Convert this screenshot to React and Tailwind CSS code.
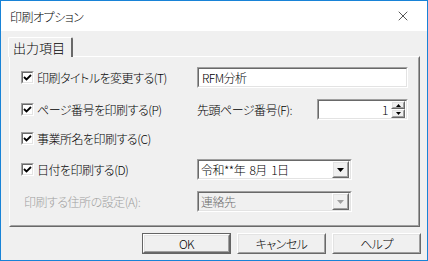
import { X } from "lucide-react";

const Sunken = ({ className = "", inner = "", children }) => (
  <div className={`border border-t-[#a0a0a0] border-l-[#a0a0a0] border-r-white border-b-white ${className}`}>
    <div className={`h-full border border-t-[#696969] border-l-[#696969] border-r-[#e3e3e3] border-b-[#e3e3e3] ${inner}`}>
      {children}
    </div>
  </div>
);

const Raised = ({ className = "", children }) => (
  <div className={`border border-t-white border-l-white border-r-[#696969] border-b-[#696969] ${className}`}>
    <div className="h-full border border-t-[#e3e3e3] border-l-[#e3e3e3] border-r-[#a0a0a0] border-b-[#a0a0a0] bg-[#f0f0f0] flex items-center justify-center">
      {children}
    </div>
  </div>
);

const CheckRow = ({ label }) => (
  <label className="flex items-center gap-[3px] w-[176px] shrink-0">
    <Sunken className="w-[13px] h-[13px] shrink-0" inner="bg-white flex items-center justify-center">
      <svg width="9" height="9" viewBox="0 0 9 9">
        <polyline points="1,4 3.5,6.5 8,2" fill="none" stroke="#000" strokeWidth="1.8" />
      </svg>
    </Sunken>
    <span className="whitespace-nowrap">{label}</span>
  </label>
);

const DownArrow = ({ color = "#000" }) => (
  <svg width="7" height="4" viewBox="0 0 7 4">
    <polygon points="0,0 7,0 3.5,4" fill={color} />
  </svg>
);

const Combo = ({ value, disabled }) => (
  <Sunken
    className="w-[155px] h-[21px]"
    inner={`${disabled ? "bg-[#f0f0f0] text-[#6d6d6d]" : "bg-white"} flex items-center pl-[2px] pr-[1px]`}
  >
    <span className="flex-1 whitespace-pre">{value}</span>
    <Raised className="w-[17px] h-[17px]">
      <DownArrow color={disabled ? "#a0a0a0" : "#000"} />
    </Raised>
  </Sunken>
);

const Button = ({ label, isDefault }) => (
  <div className={`w-[89px] h-[21px] ${isDefault ? "border border-[#646464]" : ""}`}>
    <Raised className="h-full w-full">{label}</Raised>
  </div>
);

export default function App() {
  return (
    <div className="w-[428px] h-[261px] border border-[#1883d7] bg-[#f0f0f0] flex flex-col text-[12px] leading-none font-light tracking-[-0.5px] text-black font-['Noto_Sans_CJK_JP',sans-serif] [font-feature-settings:'palt']">
      {/* Title bar */}
      <div className="h-[30px] bg-white flex items-center justify-between shrink-0">
        <span className="pl-[9px] pt-[1px]">印刷オプション</span>
        <span className="w-[45px] h-full flex items-center justify-center pr-[4px]">
          <X size={16} strokeWidth={1} />
        </span>
      </div>

      {/* Tabs */}
      <div className="px-[7px] pt-[6px] flex flex-col">
        <div className="relative z-10 -mb-px self-start w-[65px] h-[20px] bg-[#f0f0f0] border-t border-l border-t-white border-l-white border-r-2 border-r-[#696969] rounded-t-[2px] flex items-center justify-center">
          <span className="text-[13px] pr-[2px] tracking-normal">出力項目</span>
        </div>
        <div className="ml-px w-[411px] h-[171px] border border-t-white border-l-white border-r-[#696969] border-b-[#696969]">
          <div className="h-full border border-transparent border-r-[#a0a0a0] border-b-[#a0a0a0] pl-[10px] pr-[10px] pt-[9px] flex flex-col">
            <div className="flex items-center h-[21px]">
              <CheckRow label="印刷タイトルを変更する(T)" />
              <Sunken className="w-[211px] h-[21px]" inner="bg-white flex items-center pl-[3px]">
                <span>RFM分析</span>
              </Sunken>
            </div>

            <div className="flex items-center h-[21px] mt-[11px]">
              <CheckRow label="ページ番号を印刷する(P)" />
              <span className="flex-1 whitespace-nowrap">先頭ページ番号(F):</span>
              <Sunken className="w-[91px] h-[21px]" inner="bg-white flex items-center justify-end pr-px">
                <span className="pr-[3px]">1</span>
                <div className="flex flex-col">
                  <Raised className="w-[14px] h-[8px]">
                    <svg width="5" height="3" viewBox="0 0 5 3"><polygon points="2.5,0 5,3 0,3" fill="#000" /></svg>
                  </Raised>
                  <Raised className="w-[14px] h-[9px]">
                    <svg width="5" height="3" viewBox="0 0 5 3"><polygon points="0,0 5,0 2.5,3" fill="#000" /></svg>
                  </Raised>
                </div>
              </Sunken>
            </div>

            <div className="flex items-center h-[21px] mt-[8px]">
              <CheckRow label="事業所名を印刷する(C)" />
            </div>

            <div className="flex items-center h-[21px] mt-[10px]">
              <CheckRow label="日付を印刷する(D)" />
              <Combo value="令和**年  8月  1日" />
            </div>

            <div className="flex items-center h-[21px] mt-[11px]">
              <span className="w-[176px] shrink-0 pl-[3px] text-[#a0a0a0] whitespace-nowrap">印刷する住所の設定(A):</span>
              <Combo value="連絡先" disabled />
            </div>
          </div>
        </div>
      </div>

      {/* Buttons */}
      <div className="flex justify-end gap-[6px] pr-[6px] mt-[6px]">
        <Button label="OK" isDefault />
        <Button label="キャンセル" />
        <Button label="ヘルプ" />
      </div>
    </div>
  );
}
